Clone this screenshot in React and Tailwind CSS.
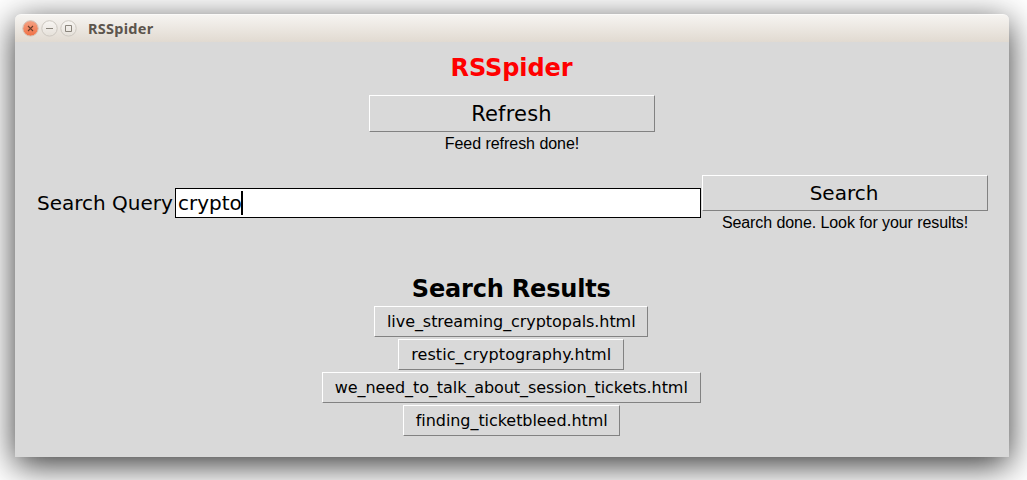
const results = [
  { name: "live_streaming_cryptopals.html", style: "w-[274px] tracking-[-0.06px]" },
  { name: "restic_cryptography.html", style: "w-[226px] tracking-[0.06px]" },
  { name: "we_need_to_talk_about_session_tickets.html", style: "w-[379px] tracking-[-0.08px]" },
  { name: "finding_ticketbleed.html", style: "w-[217px] pl-px tracking-[-0.06px]" },
];

function RaisedButton({ className, children }) {
  return (
    <button
      className={`flex items-center justify-center whitespace-nowrap border border-t-white border-l-white border-r-[#828282] border-b-[#828282] bg-[#d9d9d9] ${className}`}
    >
      {children}
    </button>
  );
}

function WindowControls() {
  return (
    <svg width="60" height="20" viewBox="0 0 60 20" fill="none" aria-hidden="true">
      <defs>
        <linearGradient id="close" x1="0" y1="0" x2="0" y2="1">
          <stop offset="0" stopColor="#f5a385" />
          <stop offset="1" stopColor="#f07044" />
        </linearGradient>
        <linearGradient id="plain" x1="0" y1="0" x2="0" y2="1">
          <stop offset="0" stopColor="#f8f6f3" />
          <stop offset="1" stopColor="#e5e0d9" />
        </linearGradient>
      </defs>
      <circle cx="10.5" cy="10.4" r="7.7" fill="url(#close)" stroke="#d3c2b6" />
      <path d="m8 8 5 5m0-5-5 5" stroke="#6b3d2b" strokeWidth="1.1" />
      <circle cx="29.5" cy="10.4" r="7.7" fill="url(#plain)" stroke="#cdc8c1" />
      <path d="M26 10.5h7" stroke="#8a857c" />
      <circle cx="48.5" cy="10.4" r="7.7" fill="url(#plain)" stroke="#cdc8c1" />
      <path d="M45.5 7.5h6v6h-6z" stroke="#8a857c" />
    </svg>
  );
}

export default function App() {
  return (
    <div className="h-[480px] w-[1027px] overflow-hidden bg-white pt-3.5 pl-[15px] font-['DejaVu_Sans',sans-serif] text-black [font-variant-ligatures:none]">
      <main className="flex h-[443px] w-[994px] flex-col rounded-t-[6px] bg-[#d9d9d9] shadow-[0_8px_34px_rgba(0,0,0,0.8)]">
        <header className="flex h-7 shrink-0 items-start rounded-t-[6px] border-t border-[#fbfaf8] bg-linear-to-b from-[#f6f4f1] to-[#e1dad1] pt-[3px] pl-[5px]">
          <WindowControls />
          <span className="ml-2 font-['Noto_Sans',sans-serif] text-[14.5px] leading-5 font-bold tracking-[0.27px] text-[#5c554d]">RSSpider</span>
        </header>

        <section className="flex flex-col items-center pt-[11px] pr-[1px]">
          <h1 className="h-[42px] text-2xl leading-[31px] font-bold tracking-[-0.1px] text-[#ff0000]">RSSpider</h1>
          <RaisedButton className="h-[37px] w-[286px] pt-[2px] text-[21px] tracking-[0.2px]">Refresh</RaisedButton>
          <p className="pl-px font-['Liberation_Sans',sans-serif] text-base leading-6 tracking-[-0.04px]">Feed refresh done!</p>
        </section>

        <section className="mt-[19px] flex h-[62px] items-start pl-[22px]">
          <label className="mt-[13px] w-[138px] shrink-0 text-[20px] leading-[30px] whitespace-nowrap">Search Query</label>
          <div className="mt-[13px] flex h-[30px] w-[526px] shrink-0 items-center border border-black bg-white pl-0.5 text-[20px]">
            <span className="whitespace-nowrap">crypto</span>
            <span className="-ml-px h-6 w-0.5 bg-black" />
          </div>
          <div className="ml-px flex w-[286px] flex-col items-center">
            <RaisedButton className="h-9 w-full pr-2 pl-[6px] text-[20px]">Search</RaisedButton>
            <p className="font-['Liberation_Sans',sans-serif] text-base leading-6 tracking-[-0.08px] whitespace-nowrap">Search done. Look for your results!</p>
          </div>
        </section>

        <section className="mt-[37px] flex flex-col items-center pr-[1.5px]">
          <h2 className="h-8 text-2xl leading-[31px] font-bold tracking-[-0.18px]">Search Results</h2>
          <div className="flex flex-col items-center gap-0.5">
            {results.map(({ name, style }) => (
              <RaisedButton key={name} className={`h-[31px] text-base ${style}`}>{name}</RaisedButton>
            ))}
          </div>
        </section>
      </main>
    </div>
  );
}
